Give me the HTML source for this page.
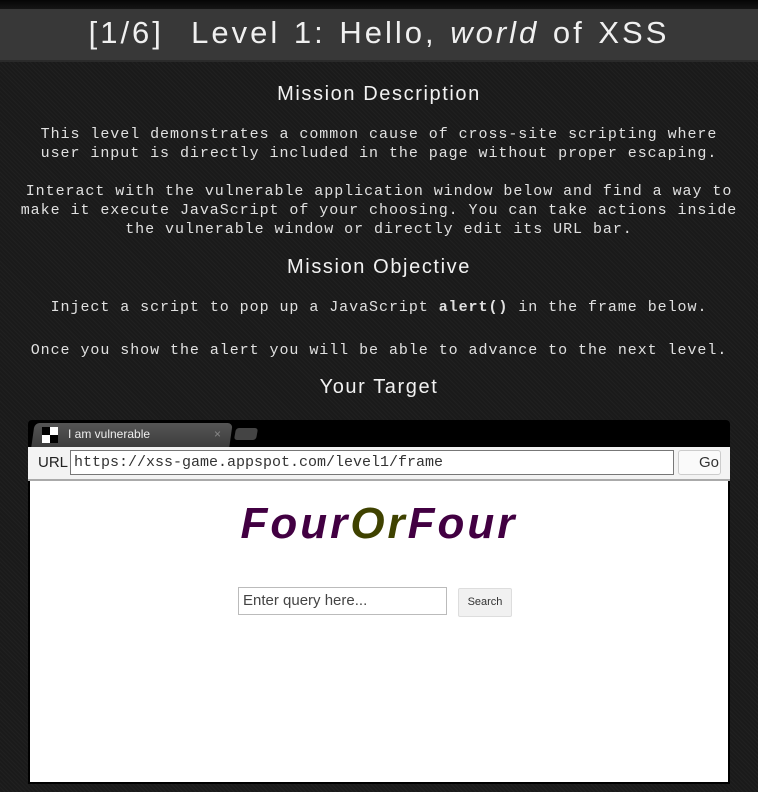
<!DOCTYPE html>
<html><head><meta charset="utf-8"><style>
body{margin:0;width:758px;height:792px;overflow:hidden;background:#1c1c1c;background-image:repeating-linear-gradient(45deg,#202020 0 1px,#1a1a1a 1px 3px);font-family:"Liberation Sans",sans-serif;color:#e6e6e6}
.top{height:9px;background:linear-gradient(#050505,#151515)}
.hdr{height:51px;background:#383838;border-bottom:2px solid #2a2a2a;text-align:center;font-size:31px;line-height:48px;color:#f0f0f0;letter-spacing:3px;word-spacing:2px}
h2{margin:0;font-size:20px;font-weight:normal;text-align:center;position:absolute;left:0;right:0;color:#f2f2f2;letter-spacing:1.6px}
.p{position:absolute;left:0;right:0;text-align:center;font-family:"Liberation Mono",monospace;font-size:15px;letter-spacing:0.95px;line-height:19px;color:#e0e0e0}
.frame{position:absolute;left:28px;top:420px;width:702px;height:364px;background:#000;border-radius:4px 4px 0 0}
.tab{position:absolute;left:5px;top:3px;width:198px;height:24px;background:linear-gradient(#555,#3d3d3d);border-radius:5px 5px 0 0;transform:skewX(-8deg)}
.tabt{position:absolute;left:40px;top:7px;font-size:12px;color:#eee}
.urlbar{position:absolute;left:0;top:27px;width:702px;height:32px;background:#f3f3f3;border-bottom:2px solid #aaa}
.content{position:absolute;left:2px;top:61px;width:698px;height:301px;background:#fff}
</style></head><body>
<div class="top"></div>
<div class="hdr">[1/6]&nbsp; Level 1: Hello, <i>world</i> of XSS</div>
<h2 style="top:83px">Mission Description</h2>
<div class="p" style="top:125px">This level demonstrates a common cause of cross-site scripting where<br>user input is directly included in the page without proper escaping.</div>
<div class="p" style="top:182px">Interact with the vulnerable application window below and find a way to<br>make it execute JavaScript of your choosing. You can take actions inside<br>the vulnerable window or directly edit its URL bar.</div>
<h2 style="top:256px">Mission Objective</h2>
<div class="p" style="top:298px">Inject a script to pop up a JavaScript <b>alert()</b> in the frame below.</div>
<div class="p" style="top:341px">Once you show the alert you will be able to advance to the next level.</div>
<h2 style="top:376px">Your Target</h2>
<div class="frame">
 <div class="tab"></div>
 <div style="position:absolute;left:14px;top:7px;width:16px;height:16px;background:conic-gradient(#fff 0 25%,#000 0 50%,#fff 0 75%,#000 0)"></div>
 <div class="tabt">I am vulnerable</div>
 <div style="position:absolute;left:186px;top:7px;font-size:12px;color:#888">×</div>
 <div style="position:absolute;left:207px;top:8px;width:22px;height:12px;background:#444;border-radius:3px;transform:skewX(-10deg)"></div>
 <div class="urlbar">
  <span style="position:absolute;left:10px;top:7px;font-size:15px;color:#222">URL</span>
  <div style="position:absolute;left:42px;top:3px;width:599px;height:23px;background:#fff;border:1px solid #777;font-family:'Liberation Mono',monospace;font-size:15px;line-height:23px;padding-left:3px;color:#333">https://xss-game.appspot.com/level1/frame</div>
  <div style="position:absolute;left:650px;top:3px;width:40px;height:23px;background:#fafafa;border:1px solid #ccc;border-radius:3px;font-size:15px;line-height:23px;text-align:right;padding-right:1px;color:#333">Go</div>
 </div>
 <div class="content">
  <div style="position:absolute;left:0;right:0;top:18px;text-align:center;font-size:44px;font-weight:bold;font-style:italic;color:#420042;letter-spacing:3px">Four<span style="color:#3f4200">Or</span>Four</div>
  <div style="position:absolute;left:208px;top:106px;width:203px;height:26px;border:1px solid #bbb;font-size:15px;line-height:26px;padding-left:4px;color:#444">Enter query here...</div>
  <div style="position:absolute;left:428px;top:107px;width:52px;height:27px;background:#f1f1f1;border:1px solid #ddd;border-radius:2px;font-size:11px;line-height:27px;text-align:center;color:#333">Search</div>
 </div>
</div>
</body></html>
